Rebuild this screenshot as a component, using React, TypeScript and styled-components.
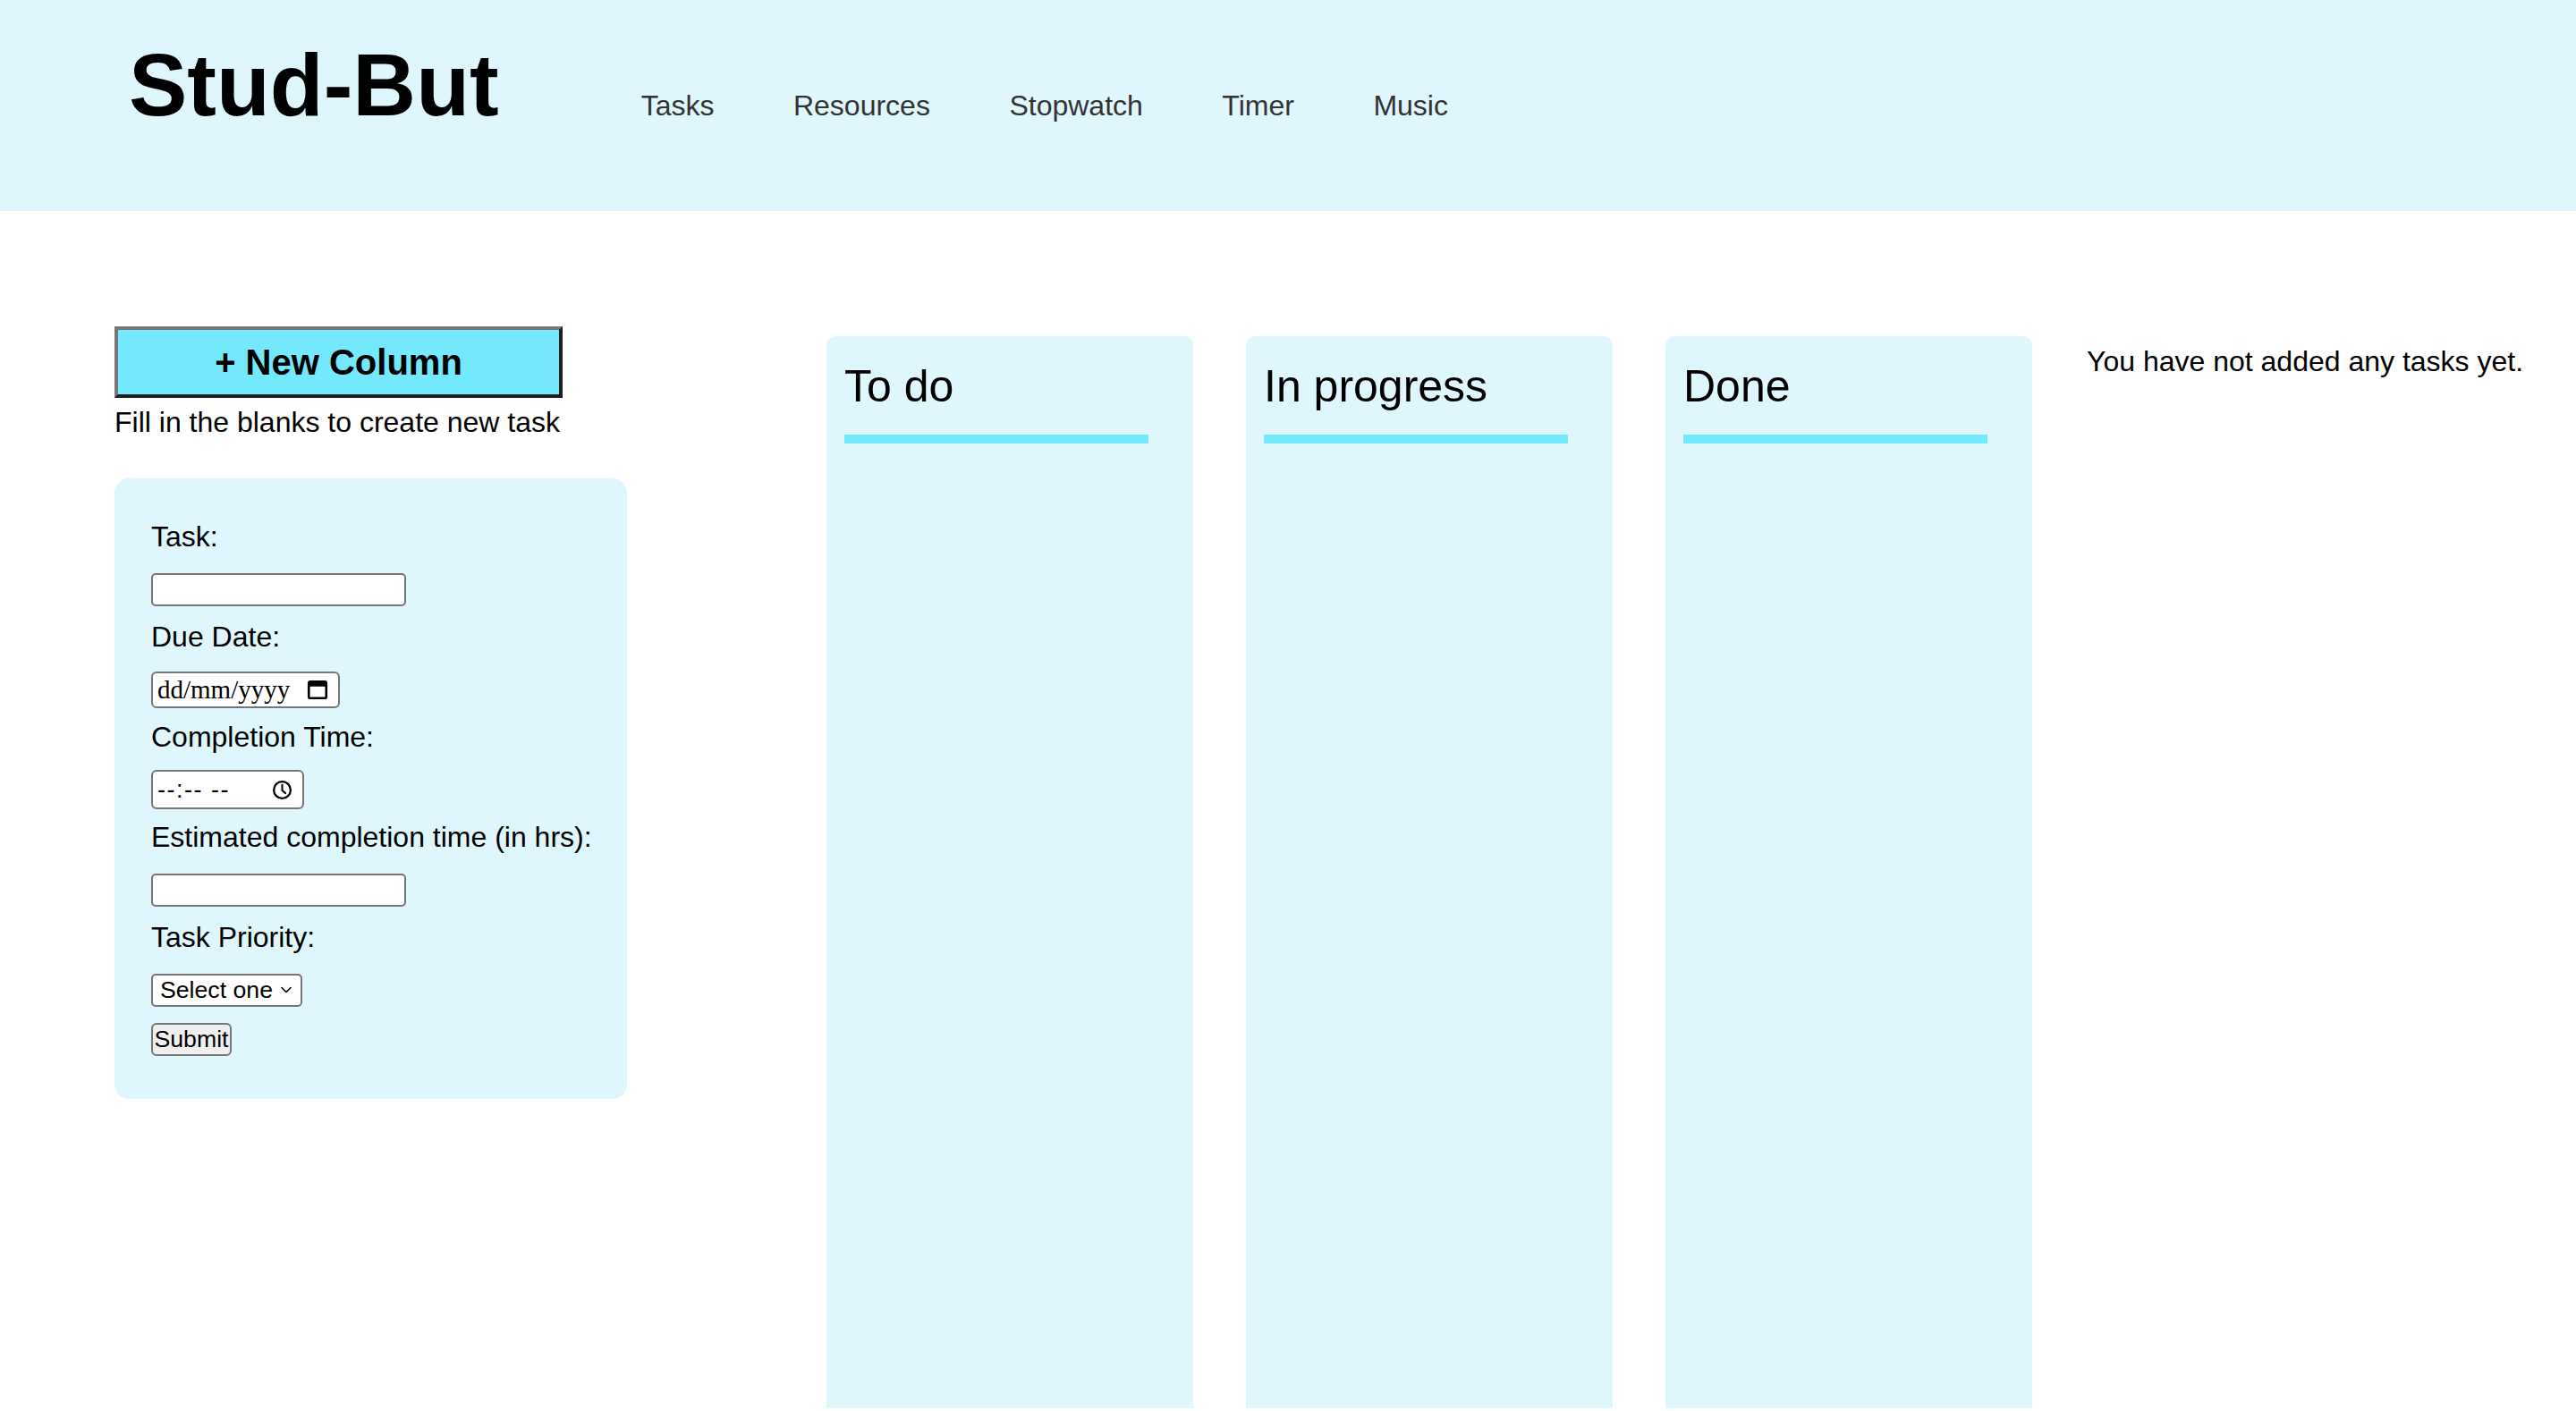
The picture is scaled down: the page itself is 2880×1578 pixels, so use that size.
import React from "react";
import styled, { createGlobalStyle } from "styled-components";

const CYAN_LIGHT = "#dff6fc";
const CYAN = "#74e8fc";

const GlobalStyle = createGlobalStyle`
  html, body { margin: 0; padding: 0; background: #fff; }
  body { font-family: "Liberation Sans", Arial, Helvetica, sans-serif; color: #000; }
  * { box-sizing: border-box; }
`;

const Header = styled.header`
  height: 236px;
  background: ${CYAN_LIGHT};
  display: flex;
  align-items: baseline;
  padding: 46px 0 0 144px;
`;

const Brand = styled.h1`
  margin: 0;
  font-size: 98px;
  font-weight: 700;
  line-height: 1;
  color: #000;
`;

const Nav = styled.nav`
  display: flex;
  align-items: baseline;
  gap: 88.5px;
  margin-left: 159px;
`;

const NavLink = styled.a`
  font-size: 32px;
  color: #333;
  text-decoration: none;
  cursor: pointer;
`;

const Main = styled.main`
  display: flex;
  align-items: flex-start;
  padding: 129px 0 0 128px;
`;

const SidePanel = styled.section`
  width: 573px;
  margin-right: 223px;
  flex-shrink: 0;
`;

const NewColumnButton = styled.button`
  display: block;
  width: 501px;
  height: 80px;
  padding: 0;
  border: 4px solid;
  border-color: #767676 #1f1f1f #1f1f1f #767676;
  background: ${CYAN};
  font-family: inherit;
  font-size: 40px;
  font-weight: 700;
  color: #000;
  cursor: pointer;
`;

const Hint = styled.p`
  margin: 9px 0 0;
  font-size: 32px;
  white-space: nowrap;
`;

const FormCard = styled.form`
  margin-top: 44px;
  background: ${CYAN_LIGHT};
  border-radius: 16px;
  padding: 47px 20px 48px 41px;
`;

const FieldLabel = styled.label`
  display: block;
  font-size: 32px;
  line-height: 37px;
  white-space: nowrap;
`;

const ControlRow = styled.div`
  height: 44px;
  margin: 18px 0 13px;
  display: flex;
  align-items: center;
`;

const TextInput = styled.input`
  width: 285px;
  height: 37px;
  border: 2px solid #767676;
  border-radius: 5px;
  background: #fff;
  padding: 0 6px;
  font-family: inherit;
  font-size: 26px;
  outline: none;
`;

const PickerBox = styled.div<{ $w: number; $h: number }>`
  width: ${(p) => p.$w}px;
  height: ${(p) => p.$h}px;
  border: 2px solid #767676;
  border-radius: 6px;
  background: #fff;
  display: flex;
  align-items: center;
  padding: 0 10px 0 5px;
`;

const PickerInput = styled.input<{ $serif?: boolean }>`
  flex: 1;
  min-width: 0;
  border: none;
  outline: none;
  background: transparent;
  padding: 0;
  font-family: ${(p) =>
    p.$serif ? `"Liberation Serif", "Times New Roman", serif` : `"Liberation Sans", Arial, sans-serif`};
  font-size: ${(p) => (p.$serif ? "29px" : "27px")};
  letter-spacing: ${(p) => (p.$serif ? "0" : "1.5px")};
  color: #000;
  &::placeholder { color: #000; opacity: 1; }
`;

const SelectBox = styled.div`
  width: 169px;
  height: 37px;
  border: 2px solid #767676;
  border-radius: 5px;
  background: #fff;
  display: flex;
  align-items: center;
  justify-content: space-between;
  padding: 0 8px 0 8px;
  font-size: 26.67px;
  cursor: pointer;
`;

const SubmitButton = styled.button`
  display: block;
  margin-top: 15px;
  width: 90px;
  height: 37px;
  padding: 0;
  border: 2px solid #767676;
  border-radius: 6px;
  background: #efefef;
  font-family: inherit;
  font-size: 26.67px;
  color: #000;
  cursor: pointer;
`;

const Board = styled.div`
  display: flex;
  align-items: flex-start;
  gap: 59px;
  margin-top: 11px;
`;

const Column = styled.section`
  width: 410px;
  height: 1199px;
  flex-shrink: 0;
  background: ${CYAN_LIGHT};
  border-radius: 10px 10px 0 0;
  padding: 27px 20px 0;
`;

const ColumnTitle = styled.h2`
  margin: 0;
  font-size: 50px;
  font-weight: 400;
  line-height: normal;
`;

const TitleBar = styled.div`
  width: 340px;
  height: 10px;
  margin-top: 25px;
  background: ${CYAN};
`;

const EmptyNote = styled.p`
  margin: 10px 0 0 2px;
  font-size: 32px;
  white-space: nowrap;
`;

const CalendarIcon = () => (
  <svg width="26" height="26" viewBox="0 0 24 24" fill="none">
    <rect x="3" y="4" width="18" height="17" rx="1.5" stroke="#000" strokeWidth="2.4" />
    <rect x="3" y="4" width="18" height="5" fill="#000" />
  </svg>
);

const ClockIcon = () => (
  <svg width="25" height="25" viewBox="0 0 24 24" fill="none">
    <circle cx="12" cy="12" r="9" stroke="#000" strokeWidth="2.2" />
    <path d="M12 6.5V12.5L15.5 15.5" stroke="#000" strokeWidth="2" strokeLinecap="round" strokeLinejoin="round" />
  </svg>
);

const ChevronIcon = () => (
  <svg width="16" height="16" viewBox="0 0 16 16" fill="none">
    <path d="M3 5.5L8 10.5L13 5.5" stroke="#000" strokeWidth="1.6" strokeLinecap="round" strokeLinejoin="round" />
  </svg>
);

const columns = ["To do", "In progress", "Done"];
const navItems = ["Tasks", "Resources", "Stopwatch", "Timer", "Music"];

export default function App() {
  return (
    <>
      <GlobalStyle />
      <Header>
        <Brand>Stud-But</Brand>
        <Nav>
          {navItems.map((n) => (
            <NavLink key={n}>{n}</NavLink>
          ))}
        </Nav>
      </Header>
      <Main>
        <SidePanel>
          <NewColumnButton type="button">+ New Column</NewColumnButton>
          <Hint>Fill in the blanks to create new task</Hint>
          <FormCard onSubmit={(e) => e.preventDefault()}>
            <FieldLabel htmlFor="task">Task:</FieldLabel>
            <ControlRow>
              <TextInput id="task" type="text" />
            </ControlRow>
            <FieldLabel htmlFor="due">Due Date:</FieldLabel>
            <ControlRow>
              <PickerBox $w={211} $h={41}>
                <PickerInput id="due" $serif placeholder="dd/mm/yyyy" />
                <CalendarIcon />
              </PickerBox>
            </ControlRow>
            <FieldLabel htmlFor="ctime">Completion Time:</FieldLabel>
            <ControlRow>
              <PickerBox $w={171} $h={44}>
                <PickerInput id="ctime" placeholder="--:-- --" />
                <ClockIcon />
              </PickerBox>
            </ControlRow>
            <FieldLabel htmlFor="est">Estimated completion time (in hrs):</FieldLabel>
            <ControlRow>
              <TextInput id="est" type="text" />
            </ControlRow>
            <FieldLabel>Task Priority:</FieldLabel>
            <ControlRow>
              <SelectBox>
                <span>Select one</span>
                <ChevronIcon />
              </SelectBox>
            </ControlRow>
            <SubmitButton type="submit">Submit</SubmitButton>
          </FormCard>
        </SidePanel>
        <Board>
          {columns.map((c) => (
            <Column key={c}>
              <ColumnTitle>{c}</ColumnTitle>
              <TitleBar />
            </Column>
          ))}
          <EmptyNote>You have not added any tasks yet.</EmptyNote>
        </Board>
      </Main>
    </>
  );
}
